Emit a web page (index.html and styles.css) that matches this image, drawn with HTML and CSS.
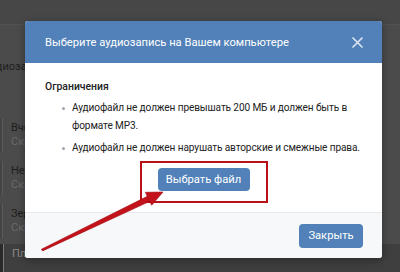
FILE: index.html
```html
<!DOCTYPE html>
<html>
<head>
    <title>Выбор аудиозаписи</title>
    <link rel="stylesheet" href="styles.css">
</head>
<body>

    <!-- страница под затемнением -->
    <div class="page">
        <div class="page-top"></div>
        <div class="page-list">
            <div class="pl-title">Аудиозаписи</div>
            <div class="pl-drop">Перетащите файлы</div>
            <div class="track">
                <div class="cover"></div>
                <div class="track-info">
                    <div class="t-name">Вчера</div>
                    <div class="t-artist">Скриптонит</div>
                </div>
            </div>
            <div class="track">
                <div class="cover"></div>
                <div class="track-info">
                    <div class="t-name">Не забывай</div>
                    <div class="t-artist">Скриптонит</div>
                </div>
            </div>
            <div class="track">
                <div class="cover"></div>
                <div class="track-info">
                    <div class="t-name">Зеркала</div>
                    <div class="t-artist">Скриптонит</div>
                </div>
            </div>
            <div class="track track-active">
                <div class="cover"></div>
                <div class="track-info">
                    <div class="t-name">Плитон</div>
                </div>
            </div>
        </div>
    </div>

    <!-- окно загрузки -->
    <div class="modal">
        <div class="modal-header">
            <div class="modal-title">Выберите аудиозапись на Вашем компьютере</div>
            <svg class="modal-close" width="11" height="11" viewBox="0 0 11 11">
                <path d="M1 1 L10 10 M10 1 L1 10" stroke="#dbe4f0" stroke-width="1.7" stroke-linecap="round"/>
            </svg>
        </div>
        <div class="modal-body">
            <div class="limits-title">Ограничения</div>
            <ul class="limits">
                <li>Аудиофайл не должен превышать 200 МБ и должен быть в формате MP3.</li>
                <li>Аудиофайл не должен нарушать авторские и смежные права.</li>
            </ul>
            <div class="choose-row">
                <div class="highlight">
                    <button class="btn">Выбрать файл</button>
                </div>
            </div>
        </div>
        <div class="modal-footer">
            <button class="btn">Закрыть</button>
        </div>
    </div>

    <!-- стрелка-указатель -->
    <svg class="arrow" width="400" height="272" viewBox="0 0 400 272">
        <polygon points="41.4,249.3 42.6,250.9 149.8,201.3 147.3,196.3" fill="#c4121a" stroke="#9e0c12" stroke-width="0.6"/>
        <polygon points="163,192 145.3,192.3 151.7,205.3" fill="#c4121a" stroke="#9e0c12" stroke-width="0.6"/>
    </svg>

</body>
</html>
```

FILE: styles.css
```css
body {
    margin: 0;
    width: 400px;
    height: 272px;
    overflow: hidden;
    position: relative;
    background-color: #4b4b4b;
    font-family: Roboto, 'Liberation Sans', sans-serif;
}

/* страница под затемнением */
.page {
    height: 272px;
    overflow: hidden;
}

.page-top {
    height: 24px;
    background-color: #474747;
    border-bottom: 1px solid #525252;
}

.page-list {
    padding-left: 10px;
}

.pl-title {
    margin-left: -26px;
    margin-top: 35px;
    font-size: 11px;
    color: #1e1e1e;
}

.pl-drop {
    margin-top: 27px;
    margin-left: 18px;
    font-size: 11px;
    color: #1e1e1e;
}

.track {
    display: flex;
    align-items: center;
    gap: 8px;
    height: 43px;
    margin-left: -10px;
}

.track:first-of-type {
    margin-top: 14px;
}

.cover {
    width: 4px;
    height: 34px;
    margin-left: -2px;
    border-right: 1px solid #5c5c5c;
    background-color: #444;
}

.t-name {
    font-size: 11px;
    color: #1e1e1e;
    line-height: 14px;
}

.t-artist {
    font-size: 11px;
    color: #6a6a6a;
    line-height: 14px;
}

.track-active {
    background-color: #3f3f3f;
    align-items: flex-start;
    margin-top: 2px;
}

.track-active .cover {
    width: 5px;
    background-color: #2a2a2a;
    border-right: 1px solid #7a7a7a;
}

.track-active .t-name {
    color: #8a8a8a;
    margin-top: 3px;
}

/* окно */
.modal {
    position: absolute;
    left: 25px;
    top: 21px;
    width: 357px;
    height: 237px;
    background-color: #fff;
    border-radius: 3px;
    overflow: hidden;
    box-shadow: 0 2px 8px rgba(0, 0, 0, 0.35);
    display: flex;
    flex-direction: column;
}

.modal-header {
    height: 42px;
    flex-shrink: 0;
    background-color: #5181b8;
    display: flex;
    align-items: center;
    justify-content: space-between;
    padding: 0 19px 0 20px;
}

.modal-title {
    color: #fff;
    font-size: 11.2px;
}

.modal-body {
    flex: 1;
    min-height: 0;
    padding: 18px 8px 0 20px;
}

.limits-title {
    font-size: 10.4px;
    font-weight: 500;
    color: #222;
    line-height: 12px;
}

.limits {
    list-style: none;
    margin: 6px 0 0 0;
    padding: 0 0 0 27px;
}

.limits li {
    position: relative;
    font-size: 10.1px;
    letter-spacing: -0.12px;
    line-height: 18px;
    color: #222;
    margin-bottom: 4px;
}

.limits li::before {
    content: '';
    position: absolute;
    left: -10px;
    top: 8px;
    width: 3px;
    height: 3px;
    border-radius: 50%;
    background-color: #a0a7b0;
}

.choose-row {
    display: flex;
    justify-content: center;
    margin-right: 12px;
    margin-top: 1px;
}

.highlight {
    border: 2px solid #b8111a;
    padding: 5px 16px 10px 16px;
}

.btn {
    background-color: #5181b8;
    color: #fff;
    border: none;
    border-radius: 4px;
    font-family: Roboto, 'Liberation Sans', sans-serif;
    font-size: 11.2px;
    height: 23px;
    padding: 0 16px;
    cursor: pointer;
}

.highlight .btn {
    width: 92px;
    padding: 0;
}

.modal-footer {
    height: 46px;
    flex-shrink: 0;
    box-sizing: border-box;
    background-color: #f7f8fa;
    border-top: 1px solid #e7e8ec;
    display: flex;
    justify-content: flex-end;
    align-items: center;
    padding: 0 19px 0 20px;
}

.modal-footer .btn {
    width: 64px;
    height: 24px;
    padding: 0;
}

.arrow {
    position: absolute;
    left: 0;
    top: 0;
}
```
